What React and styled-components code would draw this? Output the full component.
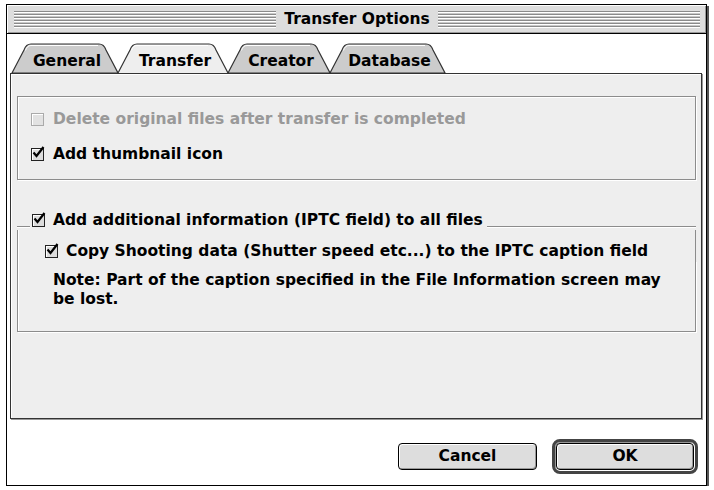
import React from 'react';
import styled, { createGlobalStyle } from 'styled-components';

const GlobalStyle = createGlobalStyle`
    html, body {
        margin: 0;
        padding: 0;
        background: #ffffff;
    }
    body {
        font-family: "DejaVu Sans", "Liberation Sans", sans-serif;
        font-weight: bold;
        font-size: 15.5px;
        color: #000;
    }
`;

const tabs = [
    { label: 'General', width: 106 },
    { label: 'Transfer', width: 110, active: true },
    { label: 'Creator', width: 102 },
    { label: 'Database', width: 115 },
];

const Check = ({ checked, disabled }) => (
    <Box $disabled={disabled}>
        {checked && (
            <svg width="14" height="14" viewBox="0 0 14 14">
                <path d="M2.5 6.5 L5.5 10 L12.5 1" fill="none" stroke="#000" strokeWidth="2.2" />
            </svg>
        )}
    </Box>
);

const Tab = ({ label, width, active }) => {
    const h = 29;
    const s = 13;
    const d = `M0 ${h} L${s - 1} 6 Q${s + 1} 0 ${s + 6} 0 L${width - s - 6} 0 Q${width - s - 1} 0 ${width - s + 1} 6 L${width} ${h}`;
    return (
        <TabItem style={{ width }}>
            <TabShape width={width} height={h + 1} viewBox={`0 0 ${width} ${h + 1}`}>
                <path d={d + (active ? '' : ' Z')} fill={active ? '#eeeeee' : '#cccccc'} stroke="#333" strokeWidth="1.2" />
                <path d={`M${s + 0.5} 6.5 Q${s + 2} 1.5 ${s + 6} 1.5 L${width - s - 7} 1.5`} fill="none" stroke="#fff" strokeWidth="1" />
            </TabShape>
            <span>{label}</span>
        </TabItem>
    );
};

const App = () => (
    <>
        <GlobalStyle />
        <Window>
            <TitleBar>
                <Stripes />
                <Title>Transfer Options</Title>
                <Stripes />
            </TitleBar>
            <Body>
                <TabRow>
                    {tabs.map((t) => (
                        <Tab key={t.label} {...t} />
                    ))}
                </TabRow>
                <Panel>
                    <Group>
                        <Row $disabled>
                            <Check disabled />
                            Delete original files after transfer is completed
                        </Row>
                        <Row>
                            <Check checked />
                            Add thumbnail icon
                        </Row>
                    </Group>
                    <TitledGroup>
                        <Legend>
                            <LegendLine $w="13px" />
                            <Check checked />
                            <LegendText>Add additional information (IPTC field) to all files</LegendText>
                            <LegendLine $grow />
                        </Legend>
                        <SubRow>
                            <Check checked />
                            Copy Shooting data (Shutter speed etc...) to the IPTC caption field
                        </SubRow>
                        <Note>
                            Note: Part of the caption specified in the File Information screen may be lost.
                        </Note>
                    </TitledGroup>
                </Panel>
                <Buttons>
                    <Button>Cancel</Button>
                    <DefaultRing>
                        <Button $wide>OK</Button>
                    </DefaultRing>
                </Buttons>
            </Body>
        </Window>
    </>
);

const Window = styled.div`
    margin: 4px 0 0 6px;
    width: 701px;
    height: 482px;
    border: 1px solid #000;
    box-shadow: 2px 2px 0 #555;
    display: flex;
    flex-direction: column;
    background: #fff;
    box-sizing: border-box;
`;

const TitleBar = styled.div`
    height: 29px;
    background: #dddddd;
    border-bottom: 1px solid #000;
    box-shadow: inset 1px 1px 0 #fff, inset -1px -1px 0 #999;
    display: flex;
    align-items: center;
    padding: 0 6px 0 7px;
    gap: 6px;
    box-sizing: border-box;
    flex-shrink: 0;
`;

const Stripes = styled.div`
    flex: 1;
    height: 17px;
    margin-top: 1px;
    background: repeating-linear-gradient(
        to bottom,
        #8a8a8a 0 1px,
        #ffffff 1px 2px,
        #c8c8c8 2px 3px
    );
`;

const Title = styled.div`
    font-size: 15.5px;
    font-weight: bold;
    padding: 0 2px;
`;

const Body = styled.div`
    flex: 1;
    display: flex;
    flex-direction: column;
    padding: 10px 4px 0 3px;
`;

const TabRow = styled.div`
    display: flex;
    padding-left: 2px;
    height: 30px;
    position: relative;
    z-index: 1;
    margin-bottom: -1px;
`;

const TabItem = styled.div`
    position: relative;
    height: 30px;
    display: flex;
    align-items: center;
    justify-content: center;
    font-size: 15.5px;

    & > span {
        position: relative;
        margin-top: 3px;
        margin-left: 4px;
    }
`;

const TabShape = styled.svg`
    position: absolute;
    left: 0;
    top: 0;
    overflow: visible;
`;

const Panel = styled.div`
    height: 346px;
    background: #eeeeee;
    border: 1px solid #333;
    box-shadow: 1px 1px 0 #999, inset 1px 1px 0 #fff;
    padding: 22px 5px 0 6px;
    box-sizing: border-box;
    display: flex;
    flex-direction: column;
    flex-shrink: 0;
`;

const Group = styled.div`
    height: 84px;
    border: 1px solid #8c8c8c;
    box-shadow: inset 1px 1px 0 #fff, 1px 1px 0 #fff;
    box-sizing: border-box;
    padding: 12px 0 0 13px;
    display: flex;
    flex-direction: column;
    gap: 15px;
`;

const Row = styled.div`
    display: flex;
    align-items: center;
    gap: 9px;
    height: 20px;
    color: ${(p) => (p.$disabled ? '#999' : '#000')};
`;

const Box = styled.div`
    width: 11px;
    height: 11px;
    border: 1px solid ${(p) => (p.$disabled ? '#aaa' : '#222')};
    background: ${(p) => (p.$disabled ? '#e2e2e2' : '#dcdcdc')};
    box-shadow: inset 1px 1px 0 #fff;
    flex-shrink: 0;
    position: relative;

    & svg {
        position: absolute;
        left: -1px;
        top: -3px;
    }
`;

const TitledGroup = styled.div`
    margin-top: 30px;
    height: 122px;
    box-sizing: border-box;
    display: flex;
    flex-direction: column;
`;

const Legend = styled.div`
    display: flex;
    align-items: center;
    height: 20px;

    & > ${Box} {
        margin: 0 8px 0 2px;
    }
`;

const LegendText = styled.span`
    margin-right: 4px;
`;

const LegendLine = styled.div`
    width: ${(p) => p.$w || 'auto'};
    flex: ${(p) => (p.$grow ? 1 : 'none')};
    align-self: flex-start;
    margin-top: 16px;
    height: 2px;
    border-top: 1px solid #8c8c8c;
    border-bottom: 1px solid #fff;
    box-sizing: border-box;
`;

const SubRow = styled.div`
    display: flex;
    align-items: center;
    gap: 8px;
    height: 20px;
    padding: 11px 0 0 27px;
    border-left: 1px solid #8c8c8c;
    border-right: 1px solid #8c8c8c;
    box-shadow: inset 1px 0 0 #fff;
`;

const Note = styled.div`
    flex: 1;
    padding: 10px 24px 0 35px;
    line-height: 19px;
    border: 1px solid #8c8c8c;
    border-top: none;
    box-shadow: inset 1px 0 0 #fff, 1px 1px 0 #fff;
`;

const Buttons = styled.div`
    flex: 1;
    display: flex;
    justify-content: flex-end;
    align-items: center;
    gap: 15px;
    padding: 8px 4px 0 0;
`;

const Button = styled.div`
    width: ${(p) => (p.$wide ? '136px' : '137px')};
    height: 25px;
    border: 1px solid #000;
    border-radius: 4px;
    background: #dddddd;
    box-shadow: inset 1px 1px 0 #fff, inset -1px -1px 0 #999;
    display: flex;
    align-items: center;
    justify-content: center;
    font-size: 15.5px;
`;

const DefaultRing = styled.div`
    padding: 1px;
    border: 3px solid #444;
    border-radius: 8px;
    background: #fff;
    box-shadow: inset 1px 1px 0 #999;
`;

export default App;
